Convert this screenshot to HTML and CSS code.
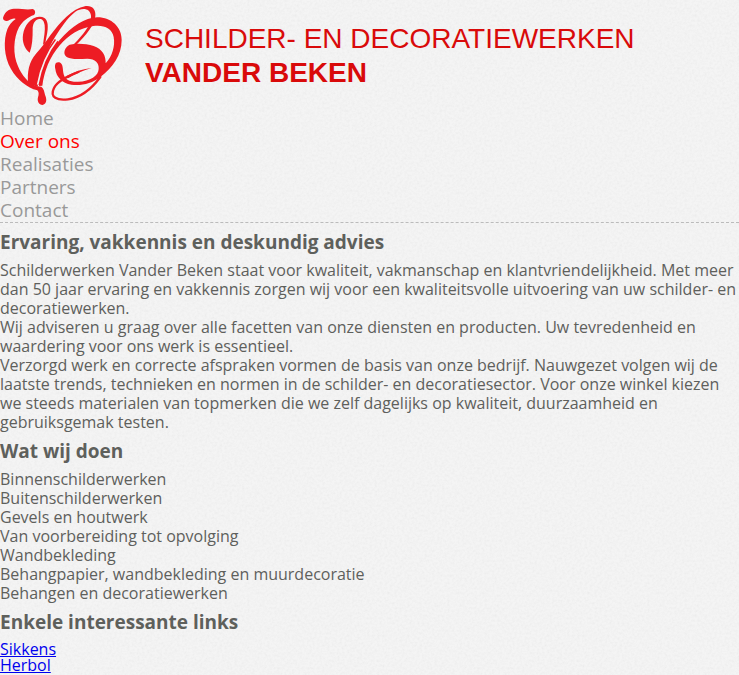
FILE: index.html
```
<!DOCTYPE html>
<html lang="nl">
<head>
<meta charset="utf-8">
<meta name="viewport" content="width=device-width, initial-scale=1">
<title>Schilder- en decoratiewerken Vander Beken</title>
<link rel="stylesheet" href="styles.css">
</head>
<body>
<header class="banner">
  <svg class="logo" viewBox="0 0 390 321" aria-hidden="true">
    <path class="fill" d="M9 54C13 40 22 29 36 27C58 25 82 31 98 27C107 30 107 40 102 45C84 51 67 64 57 82C40 115 38 163 54 199C66 227 84 248 107 258L124 260C132 266 133 276 135 284C141 298 141 310 128 315C116 314 111 304 114 292C117 283 117 276 112 271C82 264 51 239 33 207C11 171 10 119 22 88C27 75 36 64 47 57C37 51 25 65 18 63C12 62 9 59 9 54Z"/>
    <path class="fill" d="M89 158C73 146 66 123 69 104C73 76 92 51 118 50C139 49 145 65 143 88C142 102 138 116 136 130L129 134C132 111 136 91 134 76C132 61 126 56 117 57C103 60 98 73 98 89C98 113 97 137 89 158Z"/>
    <path class="fill" d="M85 252C80 217 88 183 108 161C124 144 138 125 151 106C181 67 215 25 257 18C277 16 288 28 286 48C284 73 260 105 229 134L222 132C248 105 276 73 273 47C270 22 244 23 226 35C200 55 183 84 167 108C141 149 122 202 113 260Z"/>
    <path class="fill" d="M117 258C123 205 145 158 179 120C217 78 254 53 292 52C335 52 365 82 365 120C365 165 339 202 301 231C276 251 243 258 214 254C186 250 169 231 166 207C163 193 167 184 178 187C190 192 188 207 190 218C193 239 210 246 234 245C271 245 296 226 296 207C298 190 286 176 262 176C240 176 217 180 200 171C186 160 196 140 209 134C231 129 259 131 281 138C306 147 318 166 317 190C337 168 346 138 341 111C336 83 310 74 280 78C238 84 205 106 180 135C148 172 133 214 127 257Z"/>
    <path class="line" d="M301 231C276 265 247 292 204 298C172 302 148 293 162 264C170 246 205 227 235 216"/>
    <path class="fill" d="M200 228C225 215 250 206 275 204C250 211 224 222 204 235Z"/>
    <path class="seam" d="M113 254C121 210 141 158 170 121"/>
    <path class="gleam" d="M113 254C121 210 141 158 173 117"/>
  </svg>
  <div class="brand">
    <div class="trade">SCHILDER- EN DECORATIEWERKEN</div>
    <div class="name">VANDER BEKEN</div>
  </div>
</header>
<nav class="menu">
  <a href="#home">Home</a>
  <a href="#over" class="active" aria-current="page">Over ons</a>
  <a href="#realisaties">Realisaties</a>
  <a href="#partners">Partners</a>
  <a href="#contact">Contact</a>
</nav>
<main>
  <h1>Ervaring, vakkennis en deskundig advies</h1>
  <p>Schilderwerken Vander Beken staat voor kwaliteit, vakmanschap en klantvriendelijkheid. Met meer dan 50 jaar ervaring en vakkennis zorgen wij voor een kwaliteitsvolle uitvoering van uw schilder- en decoratiewerken.</p>
  <p>Wij adviseren u graag over alle facetten van onze diensten en producten. Uw tevredenheid en waardering voor ons werk is essentieel.</p>
  <p>Verzorgd werk en correcte afspraken vormen de basis van onze bedrijf. Nauwgezet volgen wij de laatste trends, technieken en normen in de schilder- en decoratiesector. Voor onze winkel kiezen we steeds materialen van topmerken die we zelf dagelijks op kwaliteit, duurzaamheid en gebruiksgemak testen.</p>
  <h2>Wat wij doen</h2>
  <ul>
    <li>Binnenschilderwerken</li>
    <li>Buitenschilderwerken</li>
    <li>Gevels en houtwerk</li>
    <li>Van voorbereiding tot opvolging</li>
    <li>Wandbekleding</li>
    <li>Behangpapier, wandbekleding en muurdecoratie</li>
    <li>Behangen en decoratiewerken</li>
  </ul>
  <h2>Enkele interessante links</h2>
  <ul class="links">
    <li><a href="#sikkens">Sikkens</a></li>
    <li><a href="#herbol">Herbol</a></li>
  </ul>
</main>
</body>
</html>
```
FILE: styles.css
```
* {
  box-sizing: border-box;
  margin: 0;
  padding: 0;
}

body {
  /* fine paper grain */
  background: #f4f4f4 url("data:image/svg+xml,%3Csvg xmlns='http://www.w3.org/2000/svg' width='200' height='200'%3E%3Cfilter id='n' x='0' y='0' width='100%25' height='100%25'%3E%3CfeTurbulence type='fractalNoise' baseFrequency='.4' numOctaves='3' stitchTiles='stitch'/%3E%3CfeColorMatrix values='0 0 0 0 .5 0 0 0 0 .5 0 0 0 0 .5 .24 0 0 0 -.09'/%3E%3C/filter%3E%3Crect width='200' height='200' filter='url(%23n)'/%3E%3C/svg%3E");
  color: #5e605c;
  font: 16px/19px "Open Sans", sans-serif;
}

.banner {
  display: flex;
  gap: 15px;
}

.logo {
  flex: none;
  width: 130px;
  height: 107px;
}

.fill {
  fill: #ed1c24;
}

.line {
  fill: none;
  stroke: #ed1c24;
  stroke-width: 7;
  stroke-linecap: round;
}

.seam {
  fill: none;
  stroke: #ed1c24;
  stroke-width: 14;
}

.gleam {
  fill: none;
  stroke: #f3f3f3;
  stroke-width: 5;
}

.brand {
  padding-top: 22px;
  color: #d90a0a;
  font: 28px/34px "Liberation Sans", Arial, sans-serif;
}

.name {
  font-weight: bold;
}

.menu {
  display: flex;
  flex-direction: column;
  align-items: flex-start;
  border-bottom: 1px dashed #bbb;
  font-size: 19px;
  line-height: 23px;
}

.menu a {
  color: #999;
  text-decoration: none;
}

.menu .active {
  color: #f00;
}

h1,
h2 {
  font-size: 19px;
  line-height: 38px;
}

ul {
  list-style: none;
}

.links {
  line-height: 16px;
}

.links a {
  color: #00e;
}
```
